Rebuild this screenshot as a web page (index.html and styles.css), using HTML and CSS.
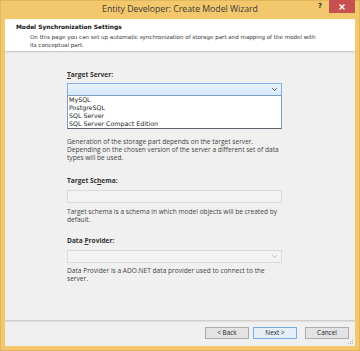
FILE: index.html
```html
<!DOCTYPE html>
<html>
  <head>
    <title>Entity Developer: Create Model Wizard</title>
    <link rel="stylesheet" href="styles.css">
  </head>
  <body>
    <div class="window">
      <div class="titlebar">
        <span></span>
        <span class="title">Entity Developer: Create Model Wizard</span>
        <div class="caption-buttons">
          <span class="help">?</span>
          <span class="close">
            <svg width="6" height="6" viewBox="0 0 6 6">
              <path d="M0.5 0.5 L5.5 5.5 M5.5 0.5 L0.5 5.5" stroke="#fff" stroke-width="1.4" />
            </svg>
          </span>
        </div>
      </div>
      <div class="client">
        <div class="header">
          <div class="header-title">Model Synchronization Settings</div>
          <div class="header-text">
            On this page you can set up automatic synchronization of storage part and mapping of the model with<br>
            its conceptual part.
          </div>
        </div>

        <div class="content">
          <div class="field">
            <div class="label"><u>T</u>arget Server:</div>
            <div class="combo combo-open">
              <svg class="arrow" width="5" height="3" viewBox="0 0 5 3">
                <path d="M0.3 0.3 L2.5 2.5 L4.7 0.3" fill="none" stroke="#3c3c3c" stroke-width="0.9" />
              </svg>
              <ul class="dropdown">
                <li>MySQL</li>
                <li>PostgreSQL</li>
                <li>SQL Server</li>
                <li>SQL Server Compact Edition</li>
              </ul>
            </div>
            <p class="hint hint-server">
              Generation of the storage part depends on the target server.<br>
              Depending on the chosen version of the server a different set of data<br>
              types will be used.
            </p>
          </div>

          <div class="field">
            <div class="label label-schema">Target Sc<u>h</u>ema:</div>
            <div class="textbox disabled"></div>
            <p class="hint">
              Target schema is a schema in which model objects will be created by<br>
              default.
            </p>
          </div>

          <div class="field">
            <div class="label label-provider">Data <u>P</u>rovider:</div>
            <div class="combo disabled">
              <svg class="arrow" width="5" height="3" viewBox="0 0 5 3">
                <path d="M0.3 0.3 L2.5 2.5 L4.7 0.3" fill="none" stroke="#b5b5b5" stroke-width="0.9" />
              </svg>
            </div>
            <p class="hint hint-provider">
              Data Provider is a ADO.NET data provider used to connect to the<br>
              server.
            </p>
          </div>
        </div>

        <div class="footer">
          <button class="btn">&lt; Back</button>
          <button class="btn btn-default">Next &gt;</button>
          <button class="btn btn-cancel">Cancel</button>
        </div>

        <svg class="grip" width="6" height="6" viewBox="0 0 6 6">
          <rect x="4" y="0" width="1" height="1" fill="#b8b8b8" />
          <rect x="2" y="2" width="1" height="1" fill="#b8b8b8" />
          <rect x="4" y="2" width="1" height="1" fill="#b8b8b8" />
          <rect x="0" y="4" width="1" height="1" fill="#b8b8b8" />
          <rect x="2" y="4" width="1" height="1" fill="#b8b8b8" />
          <rect x="4" y="4" width="1" height="1" fill="#b8b8b8" />
        </svg>
      </div>
    </div>
  </body>
</html>
```

FILE: styles.css
```css
body {
  margin: 0;
  font-family: "Open Sans", "Noto Sans", sans-serif;
}

.window {
  width: 360px;
  height: 351px;
  box-sizing: border-box;
  padding: 0 5px 5px 5px;
  background-color: #f3c86c;
  box-shadow: inset 0 0 0 1px #e2b65c;
  display: flex;
  flex-direction: column;
}

.titlebar {
  height: 19px;
  display: grid;
  grid-template-columns: 1fr auto 1fr;
  align-items: start;
}

.title {
  font-size: 8.7px;
  line-height: 18px;
  color: #3a3a3a;
  white-space: nowrap;
}

.caption-buttons {
  justify-self: end;
  display: flex;
}

.help {
  width: 18px;
  height: 13px;
  font-family: "DejaVu Sans", sans-serif;
  font-size: 7px;
  font-weight: bold;
  line-height: 13px;
  text-align: center;
  color: #333;
}

.close {
  width: 26px;
  height: 13px;
  background-color: #c75050;
  display: flex;
  align-items: center;
  justify-content: center;
}

.client {
  flex: 1;
  background-color: #f0f0f0;
  display: flex;
  flex-direction: column;
  position: relative;
}

.header {
  height: 33px;
  box-sizing: border-box;
  padding: 4px 0 0 11px;
  background-color: #fff;
  border-bottom: 1px solid #cdcdcd;
  box-shadow: 0 1px 0 #e4e4e4;
  font-family: "DejaVu Sans", sans-serif;
  color: #111;
}

.header-title {
  font-size: 5.9px;
  font-weight: bold;
  line-height: 9px;
}

.header-text {
  margin-top: 1px;
  padding-left: 14px;
  font-size: 5.55px;
  line-height: 8px;
  color: #333;
}

.content {
  flex: 1;
  padding: 18px 0 0 62px;
}

.field {
  width: 215px;
}

.label {
  font-size: 6.6px;
  font-weight: bold;
  line-height: 9px;
  color: #333;
}

.label-schema {
  margin-top: 14px;
}

.label-provider {
  margin-top: 12px;
}

.combo,
.textbox {
  height: 13px;
  box-sizing: border-box;
  margin-top: 4px;
  position: relative;
}

.textbox {
  margin-top: 5px;
}

.combo-open {
  background: linear-gradient(#eaf3fc, #d6e9fc);
  border: 1px solid #7eb4ea;
}

.disabled {
  background-color: #f3f3f3;
  border: 1px solid #dadada;
}

.label-provider + .combo {
  margin-top: 5px;
}

.arrow {
  position: absolute;
  right: 4px;
  top: 4px;
}

.dropdown {
  position: absolute;
  top: 100%;
  left: -1px;
  width: 215px;
  height: 34px;
  box-sizing: border-box;
  margin: 0;
  padding: 0 0 0 1px;
  list-style: none;
  background-color: #fff;
  border: 1px solid #7a9ec9;
  border-bottom-color: #5c6570;
  font-family: "DejaVu Sans", sans-serif;
  font-size: 6.3px;
  line-height: 8px;
  color: #222;
}

.hint {
  margin: 5px 0 0 0;
  font-size: 6.6px;
  line-height: 8px;
  color: #444;
}

.hint-server {
  margin-top: 42px;
}

.hint-provider {
  margin-top: 4px;
}

.footer {
  height: 26px;
  box-sizing: border-box;
  padding: 6px 6px 0 0;
  border-top: 1px solid #cfcfcf;
  box-shadow: inset 0 1px 0 #dedede;
  display: flex;
  justify-content: flex-end;
  align-items: flex-start;
}

.btn {
  width: 44px;
  height: 12px;
  margin: 0 0 0 4px;
  padding: 0;
  font-family: "Open Sans", sans-serif;
  font-size: 6.4px;
  line-height: 10px;
  color: #222;
  background-color: #e3e3e3;
  border: 1px solid #adadad;
  border-radius: 0;
}

.btn-default {
  border-color: #78aee5;
  background-color: #e6eef6;
}

.btn-cancel {
  margin-left: 8px;
}

.grip {
  position: absolute;
  right: 1px;
  bottom: 1px;
}
```
